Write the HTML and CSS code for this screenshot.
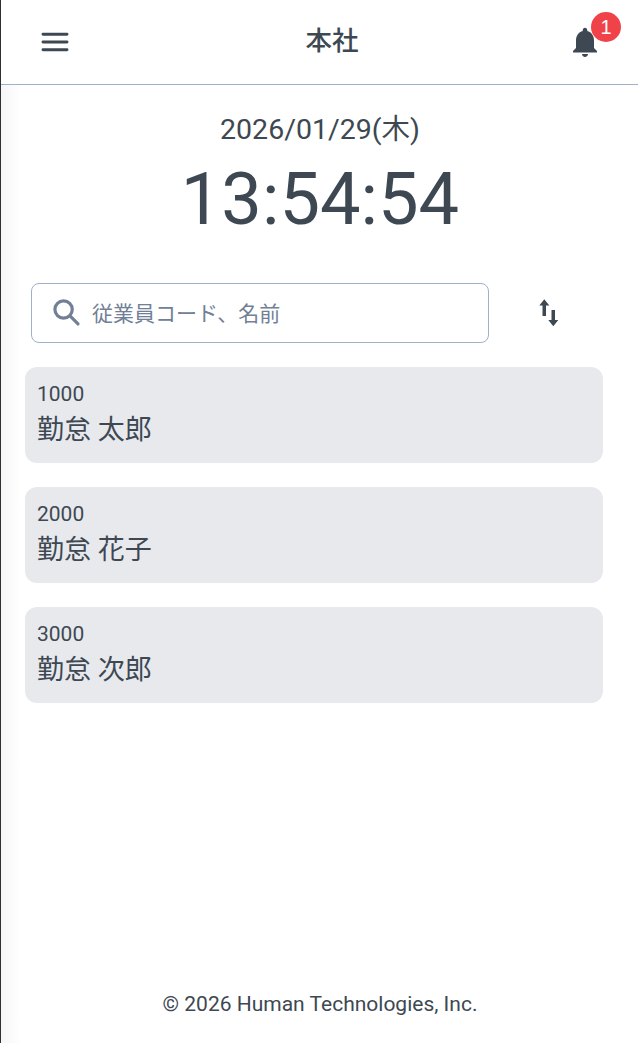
FILE: index.html
```html
<!DOCTYPE html>
<html lang="ja">
<head>
<meta charset="utf-8">
<title>本社</title>
<link rel="stylesheet" href="styles.css">
</head>
<body>
<div class="app">
  <header class="topbar">
    <button class="icon-btn menu" aria-label="メニュー">
      <svg width="32" height="32" viewBox="0 0 24 24" fill="none" stroke="#3d4852" stroke-width="2.200" stroke-linecap="round"><path d="M3 6.200h18M3 12h18M3 17.800h18"/></svg>
    </button>
    <h1 class="title">本社</h1>
    <button class="icon-btn bell" aria-label="通知">
      <svg width="36" height="36" viewBox="0 0 24 24" fill="#3d4852"><path d="M12 22c1.100 0 2-.9 2-2h-4c0 1.100.9 2 2 2zm6-6v-5c0-3.070-1.630-5.640-4.500-6.320V4c0-.83-.67-1.500-1.500-1.500s-1.500.67-1.500 1.500v.68C7.640 5.360 6 7.920 6 11v5l-2 2v1h16v-1l-2-2z"/></svg>
      <span class="badge">1</span>
    </button>
  </header>
  <main class="content">
    <div class="clock">
      <div class="date">2026/01/29(木)</div>
      <div class="time">13:54:54</div>
    </div>
    <div class="search-row">
      <label class="search">
        <svg width="32" height="32" viewBox="0 0 24 24" fill="none" stroke="#718096" stroke-width="2.400"><circle cx="10.200" cy="9.400" r="6.500"/><path d="M15 14.200L21 20.200" stroke-linecap="round"/></svg>
        <span class="placeholder">従業員コード、名前</span>
      </label>
      <button class="icon-btn sort" aria-label="並べ替え">
        <svg width="28" height="28" viewBox="0 0 28 28" fill="#3d4852"><path d="M7.300.3L2.300 6.500H5.500V17H9V6.500h3.300zM14.500 11V21H11.300l5 6.200 5-6.200H18V11z"/></svg>
      </button>
    </div>
    <ul class="list">
      <li class="card"><div class="code">1000</div><div class="name">勤怠 太郎</div></li>
      <li class="card"><div class="code">2000</div><div class="name">勤怠 花子</div></li>
      <li class="card"><div class="code">3000</div><div class="name">勤怠 次郎</div></li>
    </ul>
  </main>
  <footer class="footer">© 2026 Human Technologies, Inc.</footer>
</div>
</body>
</html>
```
FILE: styles.css
```css
* { box-sizing: border-box; }
html, body { margin: 0; height: 100%; }
body {
  font-family: Roboto, "Noto Sans CJK JP", sans-serif;
  color: #3d4852;
  background: #fff;
  overflow: hidden;
}
.app {
  height: 1043px;
  border-left: 1px solid #2d3136;
  display: flex;
  flex-direction: column;
  background: linear-gradient(90deg, #f6f6f6, #fff 20px);
}
.topbar {
  height: 85px;
  flex: none;
  background: #fff;
  border-bottom: 1px solid #a0b0c8;
  display: grid;
  grid-template-columns: 1fr auto 1fr;
  align-items: center;
  padding: 0 35px 1px 38px;
}
.icon-btn {
  border: 0;
  background: none;
  padding: 0;
  display: flex;
  align-items: center;
  justify-content: center;
  color: inherit;
}
.menu { justify-self: start; }
.title {
  margin: 0 0 0 22px;
  font-size: 26.500px;
  font-weight: 500;
  line-height: 1;
}
.bell { justify-self: end; position: relative; }
.badge {
  position: absolute;
  top: -12px;
  right: -18px;
  width: 30px;
  height: 30px;
  border-radius: 50%;
  background: #f04349;
  color: #fff;
  font-size: 20px;
  line-height: 30px;
  text-align: center;
}
.content {
  flex: 1;
  display: flex;
  flex-direction: column;
  padding: 24px 35px 0 24px;
}
.clock { text-align: center; margin-left: 7px; margin-right: -5px; }
.date { font-size: 28.500px; line-height: 42px; }
.time { font-size: 72.200px; line-height: 72px; margin-top: 13px; }
.search-row {
  margin-top: 47px;
  padding-left: 6px;
  display: flex;
  align-items: center;
}
.search {
  width: 458px;
  height: 60px;
  flex: none;
  border: 1px solid #a0b0c8;
  border-radius: 8px;
  display: flex;
  align-items: center;
  padding-left: 18px;
  gap: 10px;
}
.placeholder { font-size: 21px; color: #718096; margin-bottom: 2px; }
.sort { margin-left: 48px; }
.list {
  list-style: none;
  margin: 24px 0 0;
  padding: 0;
  display: flex;
  flex-direction: column;
  gap: 24px;
}
.card {
  height: 96px;
  border-radius: 12px;
  background: #e8e9ed;
  padding: 12px;
}
.code { font-size: 21px; line-height: 30px; }
.name { font-size: 27px; line-height: 42px; }
.footer {
  flex: none;
  height: 78px;
  text-align: center;
  font-size: 21px;
  line-height: 30px;
  margin-right: -1px;
  padding-top: 24px;
}
```
